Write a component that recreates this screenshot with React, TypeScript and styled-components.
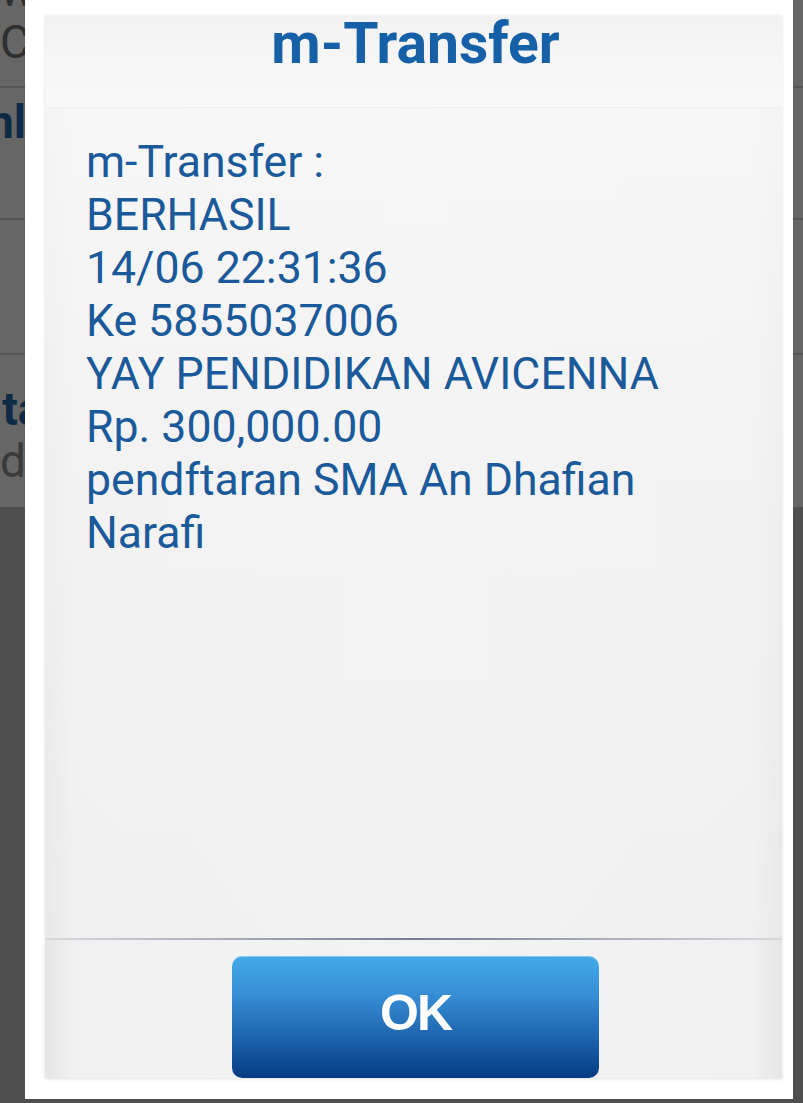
import React from "react";
import styled, { createGlobalStyle } from "styled-components";

const GlobalStyle = createGlobalStyle`
  html, body { margin: 0; padding: 0; background: #4e4e4e; }
  body { font-family: Roboto, "Noto Sans", "Liberation Sans", sans-serif; }
  * { box-sizing: border-box; }
`;

const Screen = styled.div`
  position: relative;
  width: 803px;
  height: 1103px;
  overflow: hidden;
  background: #4e4e4e;
`;

const Backdrop = styled.div`
  display: flex;
  flex-direction: column;
  width: 100%;
`;

const BgRow = styled.div<{ $h: number; $line?: boolean }>`
  height: ${(p) => p.$h}px;
  background: #666666;
  border-bottom: ${(p) => (p.$line ? "2px solid #555555" : "none")};
  display: flex;
  flex-direction: column;
  justify-content: flex-end;
  overflow: hidden;
  padding-bottom: ${(p) => (p.$line ? 18 : 20)}px;
`;

const BgText = styled.div<{ $bold?: boolean; $color: string; $indent?: number }>`
  font-size: 46px;
  line-height: 52px;
  white-space: nowrap;
  font-weight: ${(p) => (p.$bold ? 700 : 400)};
  color: ${(p) => p.$color};
  text-indent: ${(p) => p.$indent ?? 0}px;
`;

const Dialog = styled.div`
  position: absolute;
  left: 25px;
  top: 0;
  width: 768px;
  height: 1099px;
  background: #ffffff;
  padding: 15px 11px 21px 20px;
  display: flex;
`;

const Panel = styled.div`
  flex: 1;
  display: flex;
  flex-direction: column;
  background: linear-gradient(
    90deg,
    #e6e6e6 0%,
    #f1f1f1 4%,
    #f3f3f3 50%,
    #f1f1f1 96%,
    #e6e6e6 100%
  );
  box-shadow: 0 1px 3px rgba(0, 0, 0, 0.12);
`;

const Header = styled.div`
  height: 93px;
  display: flex;
  justify-content: center;
  align-items: flex-start;
  background: linear-gradient(180deg, #f2f2f2 0%, #f7f7f7 60%, #f8f8f8 100%);
  border-bottom: 1px solid #efefef;
`;

const Title = styled.h1`
  margin: 0 0 0 4px;
  font-size: 57px;
  line-height: 58px;
  font-weight: 700;
  color: #1660a8;
`;

const Body = styled.div`
  flex: 1;
  padding: 28px 20px 0 41px;
  background: linear-gradient(180deg, rgba(248,248,248,0.8) 0%, rgba(244,244,244,0.6) 40%, rgba(238,238,238,0.3) 100%);
`;

const Line = styled.div`
  font-size: 44.6px;
  line-height: 53px;
  color: #1a5a9a;
  white-space: nowrap;
`;

const Divider = styled.div`
  height: 2px;
  margin-top: 1px;
  background: linear-gradient(90deg, #d8dadf 0%, #9da2b0 30%, #767d92 50%, #9da2b0 70%, #d8dadf 100%);
`;

const Footer = styled.div`
  display: flex;
  justify-content: center;
  padding-top: 16px;
`;

const OkButton = styled.button`
  width: 367px;
  height: 122px;
  margin-left: 4px;
  border: none;
  border-radius: 10px;
  background: linear-gradient(180deg, #43aae8 0%, #3790d6 30%, #1f66b0 65%, #053a83 100%);
  box-shadow: inset 0 1px 0 rgba(255, 255, 255, 0.35);
  color: #ffffff;
  font-family: "Liberation Sans", Arial, sans-serif;
  font-weight: 700;
  font-size: 50px;
  letter-spacing: -2px;
  display: flex;
  align-items: center;
  justify-content: center;
  padding: 0 0 8px 0;
`;

const lines = [
  "m-Transfer :",
  "BERHASIL",
  "14/06 22:31:36",
  "Ke 5855037006",
  "YAY PENDIDIKAN AVICENNA",
  "Rp. 300,000.00",
  "pendftaran SMA An Dhafian",
  "Narafi",
];

export default function App() {
  return (
    <>
      <GlobalStyle />
      <Screen>
        <Backdrop>
          <BgRow $h={88} $line>
            <BgText $color="#2f2f2f">w</BgText>
            <BgText $color="#2f2f2f">Cek</BgText>
          </BgRow>
          <BgRow $h={132} $line>
            <BgText $bold $color="#0f2a45" $indent={-12}>
              nlo
            </BgText>
            <BgText $color="#666666">&nbsp;</BgText>
          </BgRow>
          <BgRow $h={135} $line>
            <BgText $color="#666666">&nbsp;</BgText>
          </BgRow>
          <BgRow $h={152}>
            <BgText $bold $color="#0f2a45" $indent={-10}>
              ita
            </BgText>
            <BgText $color="#3a3a3a">dt</BgText>
          </BgRow>
        </Backdrop>
        <Dialog>
          <Panel>
            <Header>
              <Title>m-Transfer</Title>
            </Header>
            <Body>
              {lines.map((l) => (
                <Line key={l}>{l}</Line>
              ))}
            </Body>
            <Divider />
            <Footer>
              <OkButton>OK</OkButton>
            </Footer>
          </Panel>
        </Dialog>
      </Screen>
    </>
  );
}
